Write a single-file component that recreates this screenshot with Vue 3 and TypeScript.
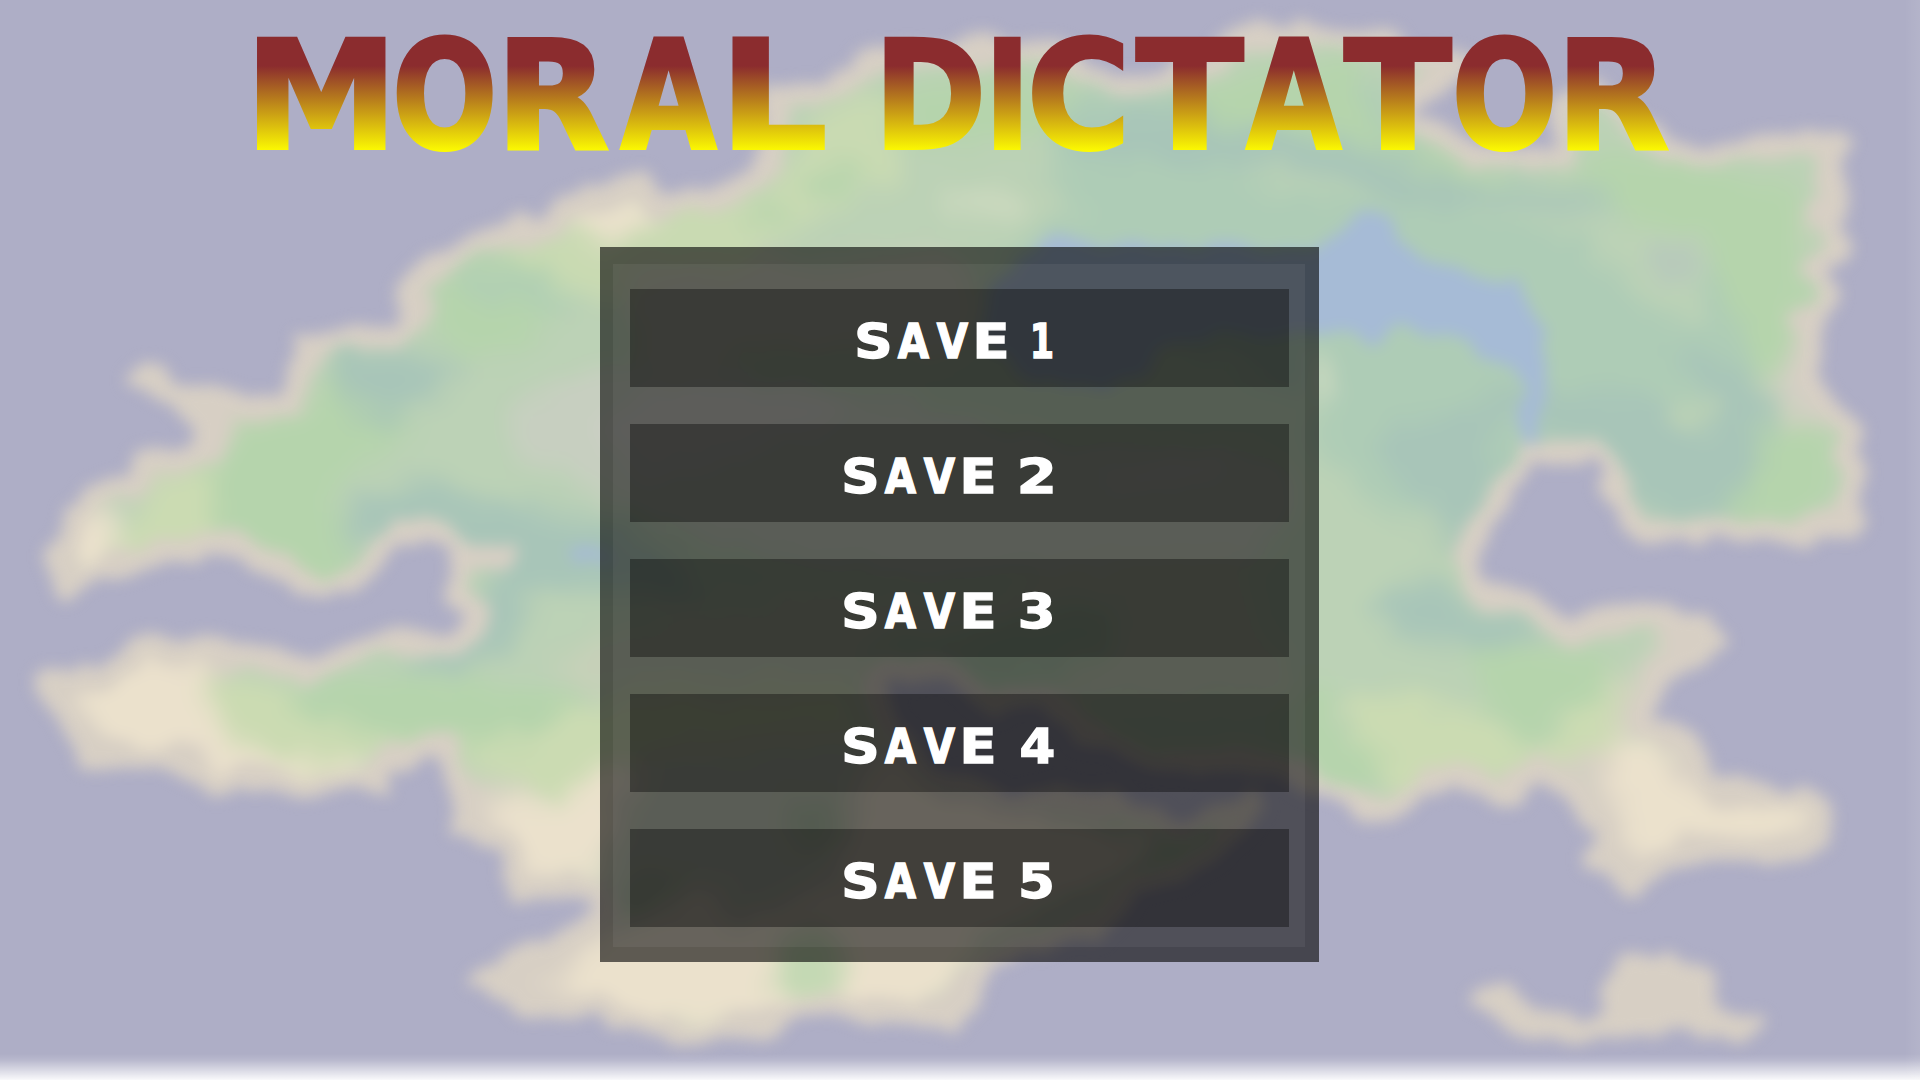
<script setup lang="ts">
interface Letter { ch: string; x: number; width: number }

const ctx = document.createElement('canvas').getContext('2d')!

// Stretches a glyph so that its ink, outline included, spans from left to right.
function fit(ch: string, left: number, right: number, outline: number): Letter {
  ctx.font = 'bold 1000px "DejaVu Sans"'
  const m = ctx.measureText(ch)
  const a = -m.actualBoundingBoxLeft
  const b = m.actualBoundingBoxRight
  const l = left + outline / 2
  const r = right - outline / 2
  const k = (r - l) / (b - a)
  return { ch, x: l - a * k, width: m.width * k }
}

const big = (ch: string, l: number, r: number) => fit(ch, l, r, 4)
const title: Letter[] = [
  big('M', 255, 386), big('O', 396, 494.5), big('R', 505.5, 608), big('A', 619, 719), big('L', 730.5, 827),
  { ch: '\u00a0', x: 832, width: 40 },
  big('D', 882.5, 981.5), big('I', 992, 1021), big('C', 1031.5, 1123.5), big('T', 1134.5, 1246),
  big('A', 1244.5, 1344), big('T', 1342.5, 1454), big('O', 1455.7, 1554.5), big('R', 1565.5, 1668),
]

function label(digit: string): Letter[] {
  const s = digit === '1' ? 227 : 214
  const small = (ch: string, l: number, r: number) => fit(ch, l, r, 1.4)
  return [
    small('S', s, s + 33), small('A', s + 40, s + 73), small('V', s + 79, s + 112), small('E', s + 119, s + 150),
    { ch: '\u00a0', x: s + 153, width: 12 },
    digit === '1' ? small('1', 403, 423) : small(digit, 390.5, digit === '4' ? 424 : 422.5),
  ]
}
const saves = ['1', '2', '3', '4', '5'].map((n) => ({ n, letters: label(n) }))

const coast =
  'M73 517L110 486L155 468L204 451L214 425L184 402L160 385L138 380L152 376L178 392L212 402L245 410L286 406L298 379L302 345L351 340L400 337L412 317L408 282L449 262L473 243L551 226L565 208L600 196L640 190L660 207L701 204L740 184L770 170L779 100L836 88L881 59L967 52L1028 48L1089 69L1122 86L1171 79L1210 62L1252 41L1280 35L1353 35L1400 56L1460 65L1415 92L1402 116L1431 139L1484 152L1529 162L1566 148L1562 110L1598 93L1635 124L1672 152L1700 155L1741 148L1775 148L1811 134L1835 148L1827 172L1839 200L1815 224L1839 248L1815 269L1831 289L1802 317L1819 351L1802 382L1835 413L1852 434L1843 458L1856 472L1847 496L1847 520L1802 535L1729 528L1647 530L1625 505L1608 475L1598 455L1562 444L1529 458L1509 482L1484 517L1466 554L1480 588L1529 609L1566 630L1635 616L1700 619L1721 647L1684 660L1651 678L1635 726L1688 747L1704 781L1749 795L1823 809L1815 840L1749 853L1696 846L1655 864L1627 881L1590 853L1602 833L1582 795L1541 767L1496 795L1455 774L1423 788L1390 812L1353 795L1321 788L1269 760L1170 764L1089 735L1040 690L995 705L950 671L885 671L869 692L893 726L926 774L987 802L1109 802L1171 826L1252 800L1220 850L1130 895L1069 933L987 957L967 981L954 1019L893 1010L836 1003L803 1010L754 1025L689 1033L640 1022L600 1010L522 1005L490 976L551 948L610 915L600 891L571 886L518 888L506 843L457 824L463 788L449 747L392 753L380 781L338 778L294 785L250 779L216 786L190 762L140 755L90 752L61 720L49 680L80 676L106 680L139 650L204 648L265 657L310 672L367 645L461 645L480 616L453 585L460 555L506 561L441 540L400 528L375 557L355 578L322 592L286 568L245 548L196 540L135 561L94 571L69 585L61 554Z'
const island =
  'M1486 998L1504 993L1533 1019L1582 1029L1619 1015L1623 967L1668 964L1704 984L1709 1012L1745 1027L1735 1029L1688 1022L1619 1022L1582 1033L1533 1024Z'

// Terrain: fill colour and outline of each tinted area.
const terrain: [string, string][] = [
  ['#d7cfc4', 'M120 360L300 360L300 410L230 430L200 460L110 500L40 600L60 480Z'],
  ['#b5d4ac', 'M235 420L300 415L330 360L420 380L400 440L330 490L360 600L245 560L200 540L212 460Z'],
  ['#cbdbb2', 'M145 490L212 465L215 560L110 570Z'],
  ['#ebe1cc', 'M75 520L122 515L118 560L70 590Z'],
  ['#b5d4ac', 'M430 280L480 258L560 265L560 310L500 360L430 340Z'],
  ['#a8c5b8', 'M320 350L390 350L465 360L450 385L380 425L345 400Z'],
  ['#b1cfb4', 'M450 275L500 270L590 290L560 312L470 296Z'],
  ['#c9dab2', 'M490 248L640 215L770 190L830 100L890 95L900 175L780 240L700 290L600 310L560 280Z'],
  ['#ebe1cc', 'M545 205L650 190L650 225L600 242L560 225Z'],
  ['#b5d4ac', 'M800 175L870 165L850 195L810 200ZM752 205L790 205L785 225L755 222Z'],
  ['#c7cfc0', 'M510 410L600 365L780 380L900 400L1050 440L1250 450L1300 500L1260 560L900 580L700 540L520 460Z'],
  ['#cfcfc8', 'M600 420L640 390L760 380L860 400L820 430L700 470L640 480ZM1090 480L1160 460L1240 450L1220 475L1130 490Z'],
  ['#cdcfbd', 'M630 270L950 250L980 300L960 360L760 350L680 390L640 360Z'],
  ['#a8c5b8', 'M350 500L420 480L500 500L600 515L690 570L680 600L620 590L540 590L510 640L470 675L390 668L460 640L500 570L430 530L340 545Z'],
  ['#c6d0b8', 'M550 660L640 620L800 590L980 600L1060 570L1240 560L1300 700L1100 700L940 670L850 690L580 690Z'],
  ['#b2ceb0', 'M860 650L1060 610L1120 600L1110 650L1010 690L880 660Z'],
  ['#b5d4ac', 'M900 90L1000 70L1070 90L1090 130L950 150L880 120Z'],
  ['#aeccb6', 'M1060 100L1380 80L1420 160L1600 200L1720 220L1760 350L1700 480L1330 520L1320 410L1230 360L1000 260L1080 210L1050 160Z'],
  ['#a8c5b8', 'M1070 130L1150 110L1330 145L1500 190L1610 195L1590 213L1440 208L1300 170L1080 155Z'],
  ['#b5d4ac', 'M1170 100L1260 70L1360 60L1375 130L1410 150L1540 185L1640 145L1700 170L1805 185L1800 410L1750 360L1710 250L1640 230L1590 185L1450 180L1340 135L1200 120Z'],
  ['#bcd2b6', 'M1220 168L1300 170L1390 200L1290 190ZM1450 205L1610 215L1710 235L1700 325L1650 315L1590 235Z'],
  ['#b7c9bb', 'M1650 245L1695 245L1690 285L1650 280Z'],
  ['#cedac0', 'M940 195L1020 190L1030 215L960 215ZM1310 350L1335 370L1325 400L1310 400Z'],
  ['#d3cfc4', 'M1800 310L1840 330L1840 430L1780 420L1770 380L1795 350ZM1790 220L1840 225L1830 245L1800 235Z'],
  ['#a8c5b8', 'M1670 340L1760 380L1775 440L1740 520L1640 515L1600 440L1500 420L1490 500L1460 560L1400 480L1370 440L1500 390L1700 400Z'],
  ['#b5d4ac', 'M1765 420L1835 430L1825 520L1720 520L1755 480Z'],
  ['#bcd2b6', 'M1665 395L1715 400L1715 425L1670 425ZM1325 470L1385 510L1390 580L1360 700L1320 700Z'],
  ['#a8c5b8', 'M1370 605L1420 580L1470 600L1560 630L1500 650L1400 640Z'],
  ['#b5d4ac', 'M1470 650L1620 650L1590 700L1520 745L1490 710Z'],
  ['#cbdbb2', 'M1340 700L1420 690L1490 720L1530 750L1625 670L1615 750L1500 780L1390 795L1360 760Z'],
  ['#b5d4ac', 'M1320 670L1340 740L1385 755L1370 790L1300 770L1290 700Z'],
  ['#d7cfc4', 'M1640 600L1740 600L1730 660L1650 680L1620 760L1680 740L1840 800L1840 860L1640 900L1570 850L1590 790L1540 765L1615 745L1625 680L1660 650Z'],
  ['#ebe1cc', 'M1605 740L1665 740L1680 785L1810 810L1790 845L1690 842L1650 865L1622 840Z'],
  ['#d7cfc4', 'M30 640L270 640L220 680L290 780L210 800L80 770L30 720Z'],
  ['#ebe1cc', 'M70 680L140 660L210 665L225 730L380 760L360 800L240 785L210 755L100 755Z'],
  ['#cbdbb2', 'M212 675L300 685L500 730L640 690L850 690L880 750L700 800L540 800L450 745L370 750L340 765L270 760L215 722Z'],
  ['#b5d4ac', 'M285 692L390 675L520 690L590 690L540 735L470 745L380 735L290 710Z'],
  ['#d7cfc4', 'M440 760L540 800L560 900L640 880L660 1040L460 1040L440 900Z'],
  ['#ebe1cc', 'M480 795L560 805L590 770L700 750L900 740L920 780L1160 840L1100 890L980 940L950 1010L760 1030L620 1020L540 980L600 940L600 885L530 880Z'],
  ['#c9d0bd', 'M640 760L850 730L890 760L850 790L840 870L820 890L740 920L690 880L640 900L610 930L600 880Z'],
  ['#b9cbb0', 'M785 800L840 800L840 850L790 850ZM630 880L700 870L650 920L615 925Z'],
  ['#c4d9b4', 'M780 935L835 930L845 980L815 1005L770 985Z'],
]
const lakes =
  'M1000 270L1040 246L1140 243L1320 250L1345 228L1380 212L1400 230L1415 258L1465 272L1515 288L1535 315L1545 330L1545 350L1548 385L1538 410L1532 460L1522 450L1518 410L1519 385L1508 360L1480 358L1468 340L1430 334L1400 326L1378 344L1350 332L1310 332L1180 340L1110 390L1030 380L980 340ZM565 552L605 549L605 564L570 567Z'
</script>

<template>
  <main class="screen">
    <svg class="map" viewBox="0 0 1920 1080" aria-hidden="true">
      <defs>
        <filter id="coast-blur" x="0" y="0" width="1920" height="1080" filterUnits="userSpaceOnUse" color-interpolation-filters="sRGB">
          <feTurbulence type="fractalNoise" baseFrequency="0.024" numOctaves="2" seed="4" result="noise" />
          <feDisplacementMap in="SourceGraphic" in2="noise" scale="32" xChannelSelector="R" yChannelSelector="G" />
          <feGaussianBlur stdDeviation="7.5" />
        </filter>
        <filter id="terrain-blur" x="0" y="0" width="1920" height="1080" filterUnits="userSpaceOnUse" color-interpolation-filters="sRGB">
          <feGaussianBlur stdDeviation="10" />
        </filter>
        <clipPath id="land"><path :d="coast" /></clipPath>
      </defs>
      <g filter="url(#coast-blur)">
        <path :d="coast" fill="#bcd2b6" />
        <g clip-path="url(#land)">
          <g filter="url(#terrain-blur)">
            <path v-for="([fill, d], i) in terrain" :key="i" :d="d" :fill="fill" />
          </g>
        </g>
        <path :d="lakes" fill="#a6bbd6" />
        <path :d="coast" class="shore" />
        <path :d="island" class="shore islet" />
      </g>
    </svg>

    <h1 class="title">
      <svg viewBox="0 0 1920 200" width="1920" height="200">
        <defs>
          <linearGradient id="heat" gradientUnits="userSpaceOnUse" x1="0" y1="66" x2="0" y2="153">
            <stop offset="0" stop-color="#8b2c2e" />
            <stop offset="1" stop-color="#ffff00" />
          </linearGradient>
        </defs>
        <text y="148" class="title-text" fill="url(#heat)" stroke="url(#heat)"><tspan
          v-for="(l, i) in title" :key="i" :x="l.x" :textLength="l.width" lengthAdjust="spacingAndGlyphs"
        >{{ l.ch }}</tspan></text>
      </svg>
    </h1>

    <section class="panel">
      <div class="slots">
        <button v-for="s in saves" :key="s.n" class="slot" type="button">
          <svg viewBox="0 0 659 98" width="659" height="98">
            <text y="69.3" class="slot-text"><tspan
              v-for="(l, i) in s.letters" :key="i" :x="l.x" :textLength="l.width" lengthAdjust="spacingAndGlyphs"
            >{{ l.ch }}</tspan></text>
          </svg>
        </button>
      </div>
    </section>
    <div class="fade"></div>
    <div class="edge"></div>
  </main>
</template>

<style>
body {
  margin: 0;
  overflow: hidden;
}
</style>

<style scoped>
.screen {
  position: relative;
  width: 1920px;
  height: 1080px;
  overflow: hidden;
  background: #aeaec6;
  font-family: "DejaVu Sans", sans-serif;
}
.map {
  position: absolute;
  inset: 0;
  width: 1920px;
  height: 1080px;
}
.shore {
  fill: none;
  stroke: #d7cfc4;
  stroke-width: 23px;
  stroke-linejoin: round;
}
.islet {
  fill: #d7cfc4;
}
.title {
  position: relative;
  height: 200px;
  margin: 0;
}
.title svg,
.slot svg {
  display: block;
  overflow: visible;
}
.title-text {
  font: bold 149.5px "DejaVu Sans", sans-serif;
  stroke-width: 4px;
  stroke-linejoin: miter;
}
.panel {
  position: relative;
  box-sizing: border-box;
  width: 719px;
  height: 715px;
  margin: 47px 0 0 600px;
  padding: 17px 14px 15px 13px;
  background: rgba(0, 0, 0, 0.6);
}
.slots {
  display: flex;
  flex-direction: column;
  gap: 37px;
  box-sizing: border-box;
  height: 683px;
  padding: 25px 16px 20px 17px;
  background: rgba(255, 255, 255, 0.06);
}
.slot {
  flex: none;
  width: 659px;
  height: 98px;
  padding: 0;
  border: 0;
  background: rgba(0, 0, 0, 0.36);
}
.slot-text {
  font: bold 47.5px "DejaVu Sans", sans-serif;
  fill: #fff;
  stroke: #fff;
  stroke-width: 1.4px;
  stroke-linejoin: miter;
}
.fade {
  position: absolute;
  left: 0;
  right: 0;
  bottom: 0;
  height: 26px;
  background: linear-gradient(rgba(255, 255, 255, 0), rgba(255, 255, 255, 0.15) 25%, rgba(255, 255, 255, 0.93));
}
.edge {
  position: absolute;
  top: 0;
  right: 0;
  bottom: 0;
  width: 14px;
  background: linear-gradient(90deg, rgba(255, 255, 255, 0.01), rgba(255, 255, 255, 0.07));
}
</style>
